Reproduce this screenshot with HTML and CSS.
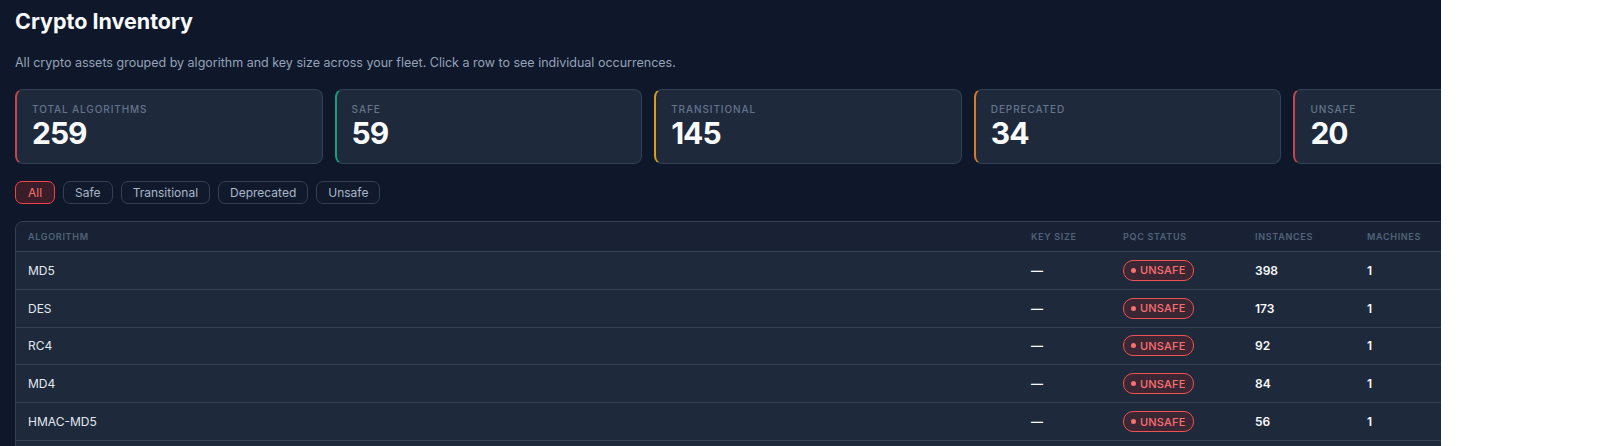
FILE: index.html
```html
<!DOCTYPE html>
<html lang="en">
<head>
    <meta charset="UTF-8">
    <title>Crypto Inventory</title>
    <link rel="stylesheet" href="styles.css">
</head>
<body>
    <div class="page">
        <div class="content">
            <h1 class="title">Crypto Inventory</h1>
            <p class="subtitle">All crypto assets grouped by algorithm and key size across your fleet. Click a row to see individual occurrences.</p>

            <div class="stats">
                <div class="stat stat-total">
                    <div class="stat-label">Total Algorithms</div>
                    <div class="stat-value">259</div>
                </div>
                <div class="stat stat-safe">
                    <div class="stat-label">Safe</div>
                    <div class="stat-value">59</div>
                </div>
                <div class="stat stat-transitional">
                    <div class="stat-label">Transitional</div>
                    <div class="stat-value">145</div>
                </div>
                <div class="stat stat-deprecated">
                    <div class="stat-label">Deprecated</div>
                    <div class="stat-value">34</div>
                </div>
                <div class="stat stat-unsafe">
                    <div class="stat-label">Unsafe</div>
                    <div class="stat-value">20</div>
                </div>
            </div>

            <div class="filters">
                <button class="filter active">All</button>
                <button class="filter">Safe</button>
                <button class="filter">Transitional</button>
                <button class="filter">Deprecated</button>
                <button class="filter">Unsafe</button>
            </div>

            <div class="table-wrap">
                <table class="inventory">
                    <colgroup>
                        <col class="col-algo">
                        <col class="col-key">
                        <col class="col-status">
                        <col class="col-instances">
                        <col>
                    </colgroup>
                    <thead>
                        <tr>
                            <th>Algorithm</th>
                            <th>Key Size</th>
                            <th>PQC Status</th>
                            <th>Instances</th>
                            <th>Machines</th>
                        </tr>
                    </thead>
                    <tbody>
                        <tr>
                            <td>MD5</td>
                            <td class="num">—</td>
                            <td><span class="badge unsafe"><span class="dot"></span>UNSAFE</span></td>
                            <td class="num">398</td>
                            <td class="num">1</td>
                        </tr>
                        <tr>
                            <td>DES</td>
                            <td class="num">—</td>
                            <td><span class="badge unsafe"><span class="dot"></span>UNSAFE</span></td>
                            <td class="num">173</td>
                            <td class="num">1</td>
                        </tr>
                        <tr>
                            <td>RC4</td>
                            <td class="num">—</td>
                            <td><span class="badge unsafe"><span class="dot"></span>UNSAFE</span></td>
                            <td class="num">92</td>
                            <td class="num">1</td>
                        </tr>
                        <tr>
                            <td>MD4</td>
                            <td class="num">—</td>
                            <td><span class="badge unsafe"><span class="dot"></span>UNSAFE</span></td>
                            <td class="num">84</td>
                            <td class="num">1</td>
                        </tr>
                        <tr>
                            <td>HMAC-MD5</td>
                            <td class="num">—</td>
                            <td><span class="badge unsafe"><span class="dot"></span>UNSAFE</span></td>
                            <td class="num">56</td>
                            <td class="num">1</td>
                        </tr>
                    </tbody>
                </table>
            </div>
        </div>
    </div>
</body>
</html>
```

FILE: styles.css
```css
html, body {
    margin: 0;
    padding: 0;
    background-color: #ffffff;
}
body {
    font-family: 'Inter', 'Noto Sans', sans-serif;
    color: #e2e8f0;
}
.page {
    width: 1441px;
    height: 446px;
    overflow: hidden;
    background-color: #0f172a;
}
.content {
    width: 1586px;
    padding: 7px 15px 0 15px;
}
.title {
    margin: 0;
    font-size: 21.5px;
    line-height: 28px;
    font-weight: 700;
    color: #f8fafc;
}
.subtitle {
    margin: 18px 0 0 0;
    font-size: 12.5px;
    line-height: 20px;
    color: #94a3b8;
}
.stats {
    display: grid;
    grid-template-columns: repeat(5, 1fr);
    gap: 12px;
    margin-top: 16px;
}
.stat {
    background-color: #1e293b;
    border: 1px solid #334155;
    border-left: 2px solid #334155;
    border-radius: 8px;
    padding: 12px 16px 13px 15px;
}
.stat-total { border-left-color: #c2474b; }
.stat-safe { border-left-color: #15a07a; }
.stat-transitional { border-left-color: #d4a017; }
.stat-deprecated { border-left-color: #d97a2b; }
.stat-unsafe { border-left-color: #c2474b; }
.stat-label {
    font-size: 10px;
    line-height: 14px;
    font-weight: 500;
    letter-spacing: 0.9px;
    text-transform: uppercase;
    color: #64748b;
}
.stat-value {
    font-size: 30px;
    line-height: 34px;
    font-weight: 700;
    color: #f8fafc;
    letter-spacing: -1px;
}
.filters {
    display: flex;
    gap: 8px;
    margin-top: 17px;
}
.filter {
    font-family: inherit;
    font-size: 12px;
    line-height: 15px;
    height: 23px;
    padding: 3px 11px;
    background-color: #111a2c;
    color: #aab6c8;
    border: 1px solid #334155;
    border-radius: 7px;
    cursor: pointer;
}
.filter.active {
    padding: 3px 12px;
    background-color: #3a1d29;
    color: #f87171;
    border-color: #ef4444;
}
/* wrapper keeps the card colour below the last visible row */
.table-wrap {
    margin-top: 17px;
    min-height: 260px;
    border: 1px solid #334155;
    border-radius: 8px 8px 0 0;
    overflow: hidden;
    background-color: #1e293b;
}
.inventory {
    width: 100%;
    border-collapse: collapse;
    table-layout: fixed;
}
.col-algo { width: 1003px; }
.col-key { width: 92px; }
.col-status { width: 132px; }
.col-instances { width: 112px; }
.inventory th {
    text-align: left;
    height: 29px;
    padding: 0 12px;
    font-size: 9px;
    font-weight: 600;
    letter-spacing: 0.7px;
    text-transform: uppercase;
    color: #52627a;
    background-color: #182234;
    border-bottom: 1px solid #334155;
}
.inventory td {
    height: 37.8px;
    padding: 0 12px;
    font-size: 12px;
    color: #e2e8f0;
    border-bottom: 1px solid #334155;
    box-sizing: border-box;
}
.inventory td.num {
    font-weight: 600;
    color: #f8fafc;
}
.badge {
    display: inline-flex;
    align-items: center;
    gap: 4px;
    height: 19px;
    padding: 0 7px;
    border-radius: 10px;
    font-size: 11px;
    font-weight: 500;
    letter-spacing: 0.2px;
}
.badge.unsafe {
    color: #f87171;
    border: 1px solid #ef5350;
    background-color: #3b2634;
}
.dot {
    width: 5px;
    height: 5px;
    border-radius: 50%;
    background-color: #f87171;
}
```
